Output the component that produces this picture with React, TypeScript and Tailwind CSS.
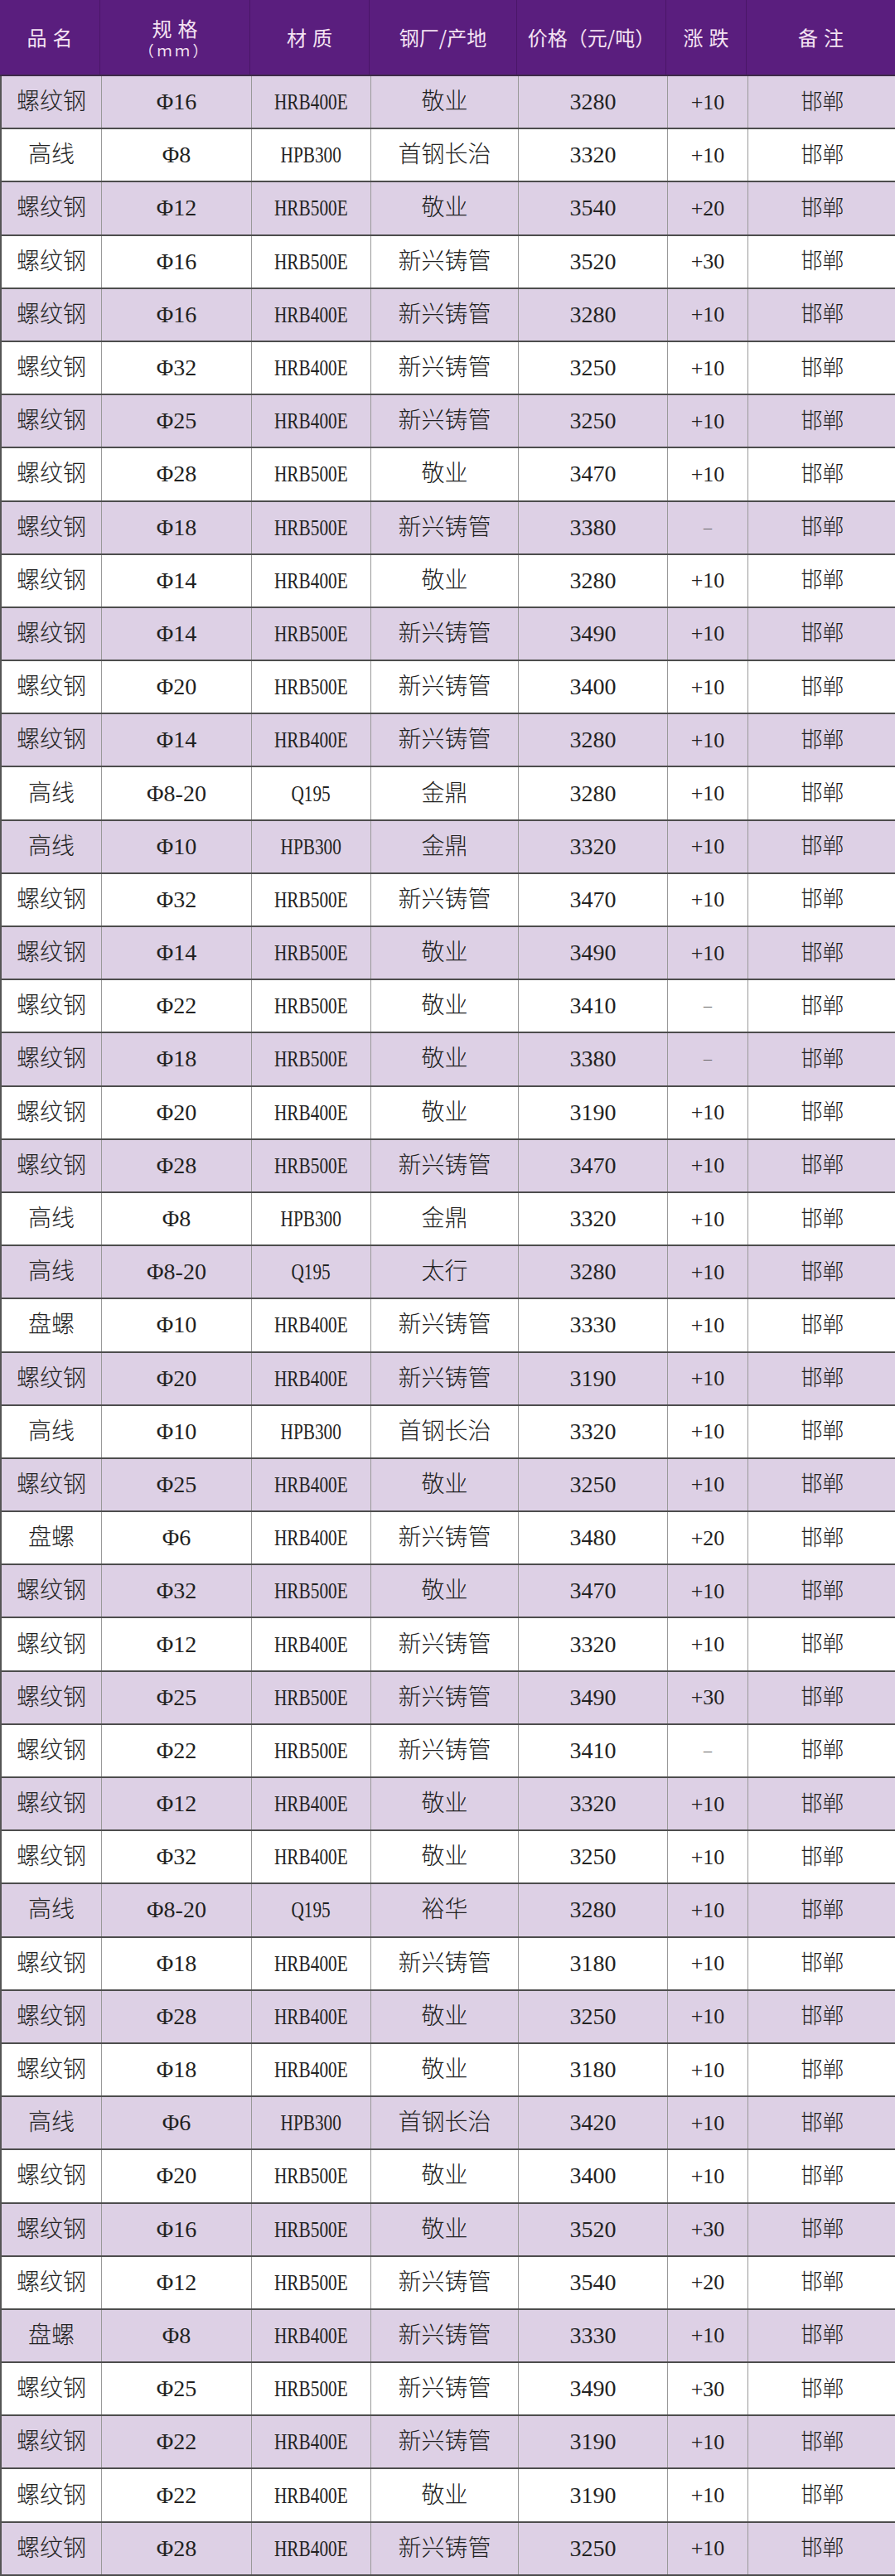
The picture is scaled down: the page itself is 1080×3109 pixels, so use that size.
const rows: string[][] = [
  ["螺纹钢", "Φ16", "HRB400E", "敬业", "3280", "+10"],
  ["高线", "Φ8", "HPB300", "首钢长治", "3320", "+10"],
  ["螺纹钢", "Φ12", "HRB500E", "敬业", "3540", "+20"],
  ["螺纹钢", "Φ16", "HRB500E", "新兴铸管", "3520", "+30"],
  ["螺纹钢", "Φ16", "HRB400E", "新兴铸管", "3280", "+10"],
  ["螺纹钢", "Φ32", "HRB400E", "新兴铸管", "3250", "+10"],
  ["螺纹钢", "Φ25", "HRB400E", "新兴铸管", "3250", "+10"],
  ["螺纹钢", "Φ28", "HRB500E", "敬业", "3470", "+10"],
  ["螺纹钢", "Φ18", "HRB500E", "新兴铸管", "3380", "–"],
  ["螺纹钢", "Φ14", "HRB400E", "敬业", "3280", "+10"],
  ["螺纹钢", "Φ14", "HRB500E", "新兴铸管", "3490", "+10"],
  ["螺纹钢", "Φ20", "HRB500E", "新兴铸管", "3400", "+10"],
  ["螺纹钢", "Φ14", "HRB400E", "新兴铸管", "3280", "+10"],
  ["高线", "Φ8-20", "Q195", "金鼎", "3280", "+10"],
  ["高线", "Φ10", "HPB300", "金鼎", "3320", "+10"],
  ["螺纹钢", "Φ32", "HRB500E", "新兴铸管", "3470", "+10"],
  ["螺纹钢", "Φ14", "HRB500E", "敬业", "3490", "+10"],
  ["螺纹钢", "Φ22", "HRB500E", "敬业", "3410", "–"],
  ["螺纹钢", "Φ18", "HRB500E", "敬业", "3380", "–"],
  ["螺纹钢", "Φ20", "HRB400E", "敬业", "3190", "+10"],
  ["螺纹钢", "Φ28", "HRB500E", "新兴铸管", "3470", "+10"],
  ["高线", "Φ8", "HPB300", "金鼎", "3320", "+10"],
  ["高线", "Φ8-20", "Q195", "太行", "3280", "+10"],
  ["盘螺", "Φ10", "HRB400E", "新兴铸管", "3330", "+10"],
  ["螺纹钢", "Φ20", "HRB400E", "新兴铸管", "3190", "+10"],
  ["高线", "Φ10", "HPB300", "首钢长治", "3320", "+10"],
  ["螺纹钢", "Φ25", "HRB400E", "敬业", "3250", "+10"],
  ["盘螺", "Φ6", "HRB400E", "新兴铸管", "3480", "+20"],
  ["螺纹钢", "Φ32", "HRB500E", "敬业", "3470", "+10"],
  ["螺纹钢", "Φ12", "HRB400E", "新兴铸管", "3320", "+10"],
  ["螺纹钢", "Φ25", "HRB500E", "新兴铸管", "3490", "+30"],
  ["螺纹钢", "Φ22", "HRB500E", "新兴铸管", "3410", "–"],
  ["螺纹钢", "Φ12", "HRB400E", "敬业", "3320", "+10"],
  ["螺纹钢", "Φ32", "HRB400E", "敬业", "3250", "+10"],
  ["高线", "Φ8-20", "Q195", "裕华", "3280", "+10"],
  ["螺纹钢", "Φ18", "HRB400E", "新兴铸管", "3180", "+10"],
  ["螺纹钢", "Φ28", "HRB400E", "敬业", "3250", "+10"],
  ["螺纹钢", "Φ18", "HRB400E", "敬业", "3180", "+10"],
  ["高线", "Φ6", "HPB300", "首钢长治", "3420", "+10"],
  ["螺纹钢", "Φ20", "HRB500E", "敬业", "3400", "+10"],
  ["螺纹钢", "Φ16", "HRB500E", "敬业", "3520", "+30"],
  ["螺纹钢", "Φ12", "HRB500E", "新兴铸管", "3540", "+20"],
  ["盘螺", "Φ8", "HRB400E", "新兴铸管", "3330", "+10"],
  ["螺纹钢", "Φ25", "HRB500E", "新兴铸管", "3490", "+30"],
  ["螺纹钢", "Φ22", "HRB400E", "新兴铸管", "3190", "+10"],
  ["螺纹钢", "Φ22", "HRB400E", "敬业", "3190", "+10"],
  ["螺纹钢", "Φ28", "HRB400E", "新兴铸管", "3250", "+10"],
  ["", "", "", "", "", ""],
];

const cols = "grid grid-cols-[121px_181px_144px_178px_180px_97px_179px]";
const serif = "font-['Liberation_Serif','Noto_Sans_CJK_SC',serif]";

export default function App() {
  return (
    <div className="w-[1080px] h-[3109px] overflow-hidden bg-white">
      {/* header */}
      <div
        className={`${cols} h-[92px] bg-[#5a1e7e] text-[#f4e2f2] border-b-2 border-[#3d2a48] font-['Noto_Sans_CJK_SC',sans-serif] text-[24px]`}
      >
        <div className="flex items-center justify-center border-r border-[#4a1668] tracking-[0.3em] pl-[0.3em]">品名</div>
        <div className="flex flex-col items-center justify-center border-r border-[#4a1668] leading-tight">
          <span className="tracking-[0.3em] pl-[0.3em]">规格</span>
          <span className="text-[18px] tracking-[0.2em]">（ｍｍ）</span>
        </div>
        <div className="flex items-center justify-center border-r border-[#4a1668] tracking-[0.3em] pl-[0.3em]">材质</div>
        <div className="flex items-center justify-center border-r border-[#4a1668]">钢厂/产地</div>
        <div className="flex items-center justify-center border-r border-[#4a1668]">价格（元/吨）</div>
        <div className="flex items-center justify-center border-r border-[#4a1668] tracking-[0.3em] pl-[0.3em]">涨跌</div>
        <div className="flex items-center justify-center tracking-[0.3em] pl-[0.3em]">备注</div>
      </div>

      {/* body */}
      <div className={`${serif} text-[#222] border-l-2 border-[#555]`}>
        {rows.map((r, i) => (
          <div
            key={i}
            className={`${cols} h-[64.2px] border-b-2 border-[#4d4d4d] ${i % 2 === 0 ? "bg-[#ddd0e5]" : "bg-white"}`}
          >
            <div className="flex items-center justify-center border-r border-[#999] text-[28px] font-light">{r[0]}</div>
            <div className="flex items-center justify-center border-r border-[#999] text-[28px]">{r[1]}</div>
            <div className="flex items-center justify-center border-r border-[#999] text-[28px]">
              <span className="inline-block scale-x-[0.76]">{r[2]}</span>
            </div>
            <div className="flex items-center justify-center border-r border-[#999] text-[28px] font-light">{r[3]}</div>
            <div className="flex items-center justify-center border-r border-[#999] text-[28px]">{r[4]}</div>
            <div className="flex items-center justify-center border-r border-[#999] text-[26px]">
              {r[5] === "–" ? <span className="text-[#666] text-[20px]">–</span> : r[5]}
            </div>
            <div className="flex items-center justify-center text-[26px] font-light">{r[0] ? "邯郸" : ""}</div>
          </div>
        ))}
      </div>
    </div>
  );
}
